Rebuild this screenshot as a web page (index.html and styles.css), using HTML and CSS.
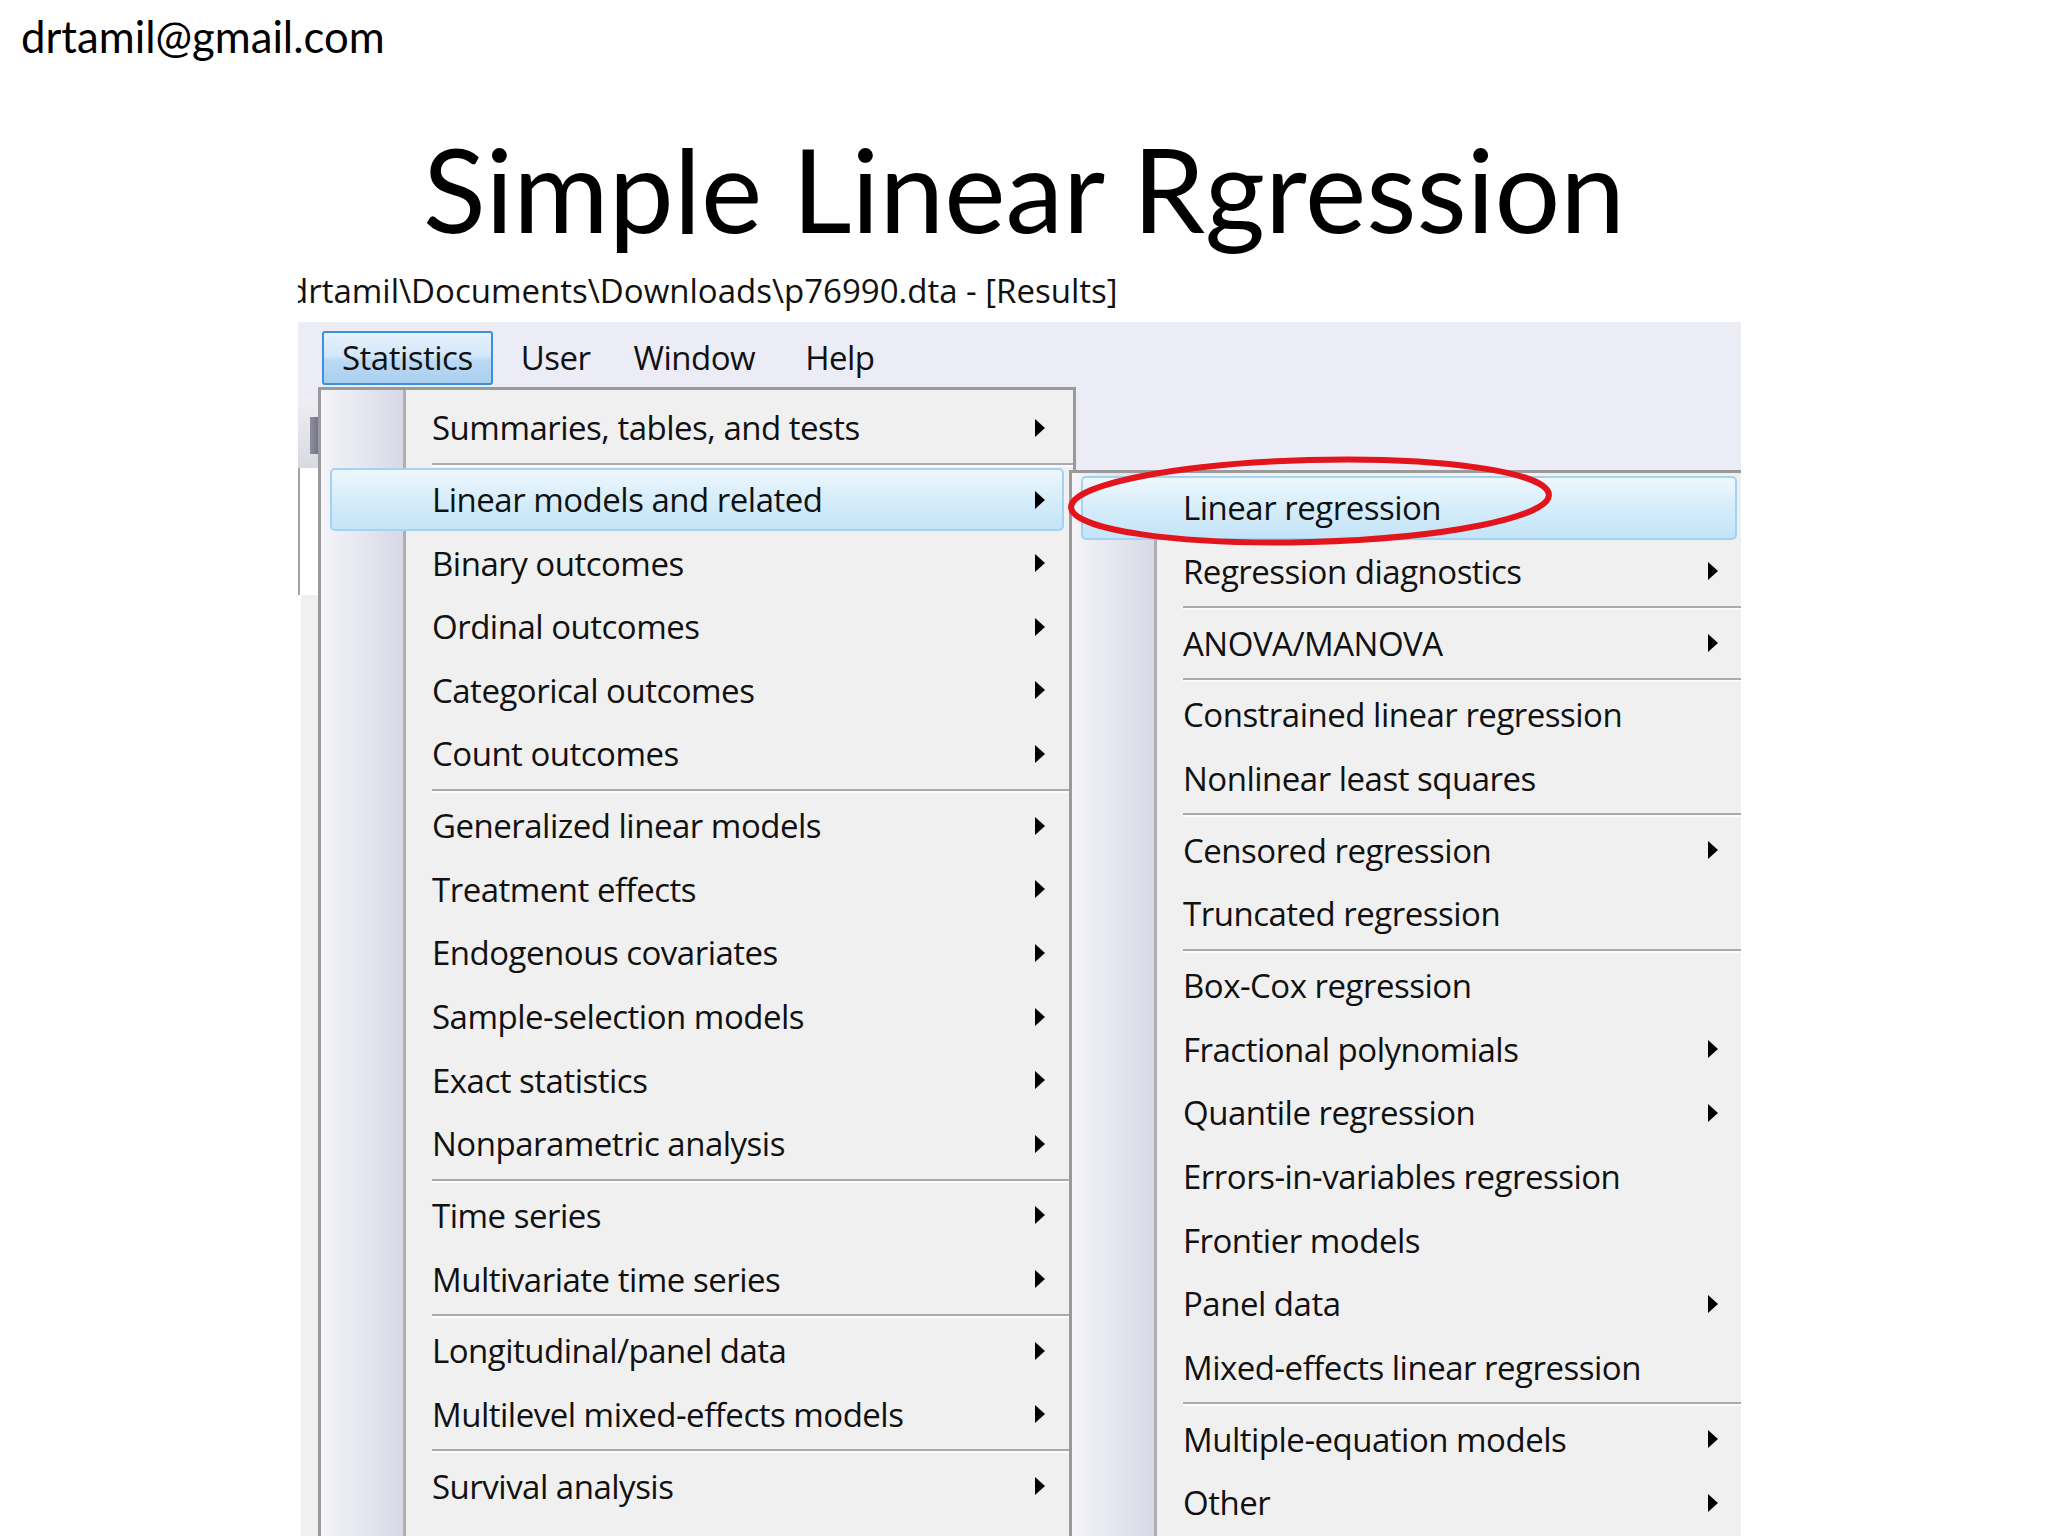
FILE: index.html
```html
<!DOCTYPE html>
<html lang="en">
<head>
  <meta charset="UTF-8" />
  <title>Simple Linear Rgression</title>
  <link rel="stylesheet" href="styles.css">
</head>
<body>

  <div class="email">drtamil@gmail.com</div>

  <h1 class="title">Simple Linear Rgression</h1>

  <div class="shot">
    <div class="titlebar">drtamil\Documents\Downloads\p76990.dta - [Results]</div>

    <div class="menubar">
      <span class="mb-item active">Statistics</span>
      <span class="mb-item mb-user">User</span>
      <span class="mb-item mb-window">Window</span>
      <span class="mb-item mb-help">Help</span>
    </div>

    <div class="workspace">
      <div class="strip">
        <div class="strip-gap"></div>
        <div class="strip-toolbar"><div class="strip-nub"></div></div>
        <div class="strip-pane"></div>
        <div class="strip-rest"></div>
      </div>

      <ul class="menu main-menu">
        <li class="item sub">Summaries, tables, and tests</li>
        <li class="sep"></li>
        <li class="item sub hot">Linear models and related</li>
        <li class="item sub">Binary outcomes</li>
        <li class="item sub">Ordinal outcomes</li>
        <li class="item sub">Categorical outcomes</li>
        <li class="item sub">Count outcomes</li>
        <li class="sep"></li>
        <li class="item sub">Generalized linear models</li>
        <li class="item sub">Treatment effects</li>
        <li class="item sub">Endogenous covariates</li>
        <li class="item sub">Sample-selection models</li>
        <li class="item sub">Exact statistics</li>
        <li class="item sub">Nonparametric analysis</li>
        <li class="sep"></li>
        <li class="item sub">Time series</li>
        <li class="item sub">Multivariate time series</li>
        <li class="sep"></li>
        <li class="item sub">Longitudinal/panel data</li>
        <li class="item sub">Multilevel mixed-effects models</li>
        <li class="sep"></li>
        <li class="item sub">Survival analysis</li>
      </ul>

      <ul class="menu side-menu">
        <li class="item hot">Linear regression</li>
        <li class="item sub">Regression diagnostics</li>
        <li class="sep"></li>
        <li class="item sub">ANOVA/MANOVA</li>
        <li class="sep"></li>
        <li class="item">Constrained linear regression</li>
        <li class="item">Nonlinear least squares</li>
        <li class="sep"></li>
        <li class="item sub">Censored regression</li>
        <li class="item">Truncated regression</li>
        <li class="sep"></li>
        <li class="item">Box-Cox regression</li>
        <li class="item sub">Fractional polynomials</li>
        <li class="item sub">Quantile regression</li>
        <li class="item">Errors-in-variables regression</li>
        <li class="item">Frontier models</li>
        <li class="item sub">Panel data</li>
        <li class="item">Mixed-effects linear regression</li>
        <li class="sep"></li>
        <li class="item sub">Multiple-equation models</li>
        <li class="item sub">Other</li>
      </ul>
    </div>

    <!-- red marker drawn around the chosen command -->
    <svg class="ring" width="490" height="94" viewBox="0 0 490 94">
      <ellipse cx="245" cy="47" rx="239" ry="41" fill="none" stroke="#e3141b" stroke-width="6" transform="rotate(-1.5 245 47)"/>
    </svg>
  </div>

</body>
</html>
```

FILE: styles.css
```css
* {
  box-sizing: border-box;
}

body {
  margin: 0;
  background: #ffffff;
  color: #000;
}

.email {
  font-family: Lato, 'Open Sans', sans-serif;
  font-size: 43.7px;
  line-height: 53px;
  padding: 10px 0 0 21px;
  height: 63px;
}

.title {
  margin: 55px 0 0;
  font-family: Lato, 'Open Sans', sans-serif;
  font-weight: normal;
  font-size: 116px;
  line-height: 142px;
  text-align: center;
}

.shot {
  position: relative;
  margin: 8px 0 0 298px;
  width: 1443px;
  height: 1268px;
  overflow: hidden;
  font-family: 'Open Sans', 'Noto Sans', sans-serif;
  font-size: 33px;
  letter-spacing: -0.5px;
  color: #111;
}

.titlebar {
  height: 54px;
  line-height: 45px;
  white-space: nowrap;
  text-indent: -10px;
  letter-spacing: 0;
  background: #fff;
}

.menubar {
  display: flex;
  align-items: flex-start;
  gap: 5px;
  height: 65px;
  padding: 9px 0 0 24px;
  background: #ececf6;
}

.mb-item {
  padding: 0 18px;
  line-height: 50px;
  border: 2px solid transparent;
  border-radius: 3px;
}

.mb-item.active {
  border-color: #3d8fd9;
  background: linear-gradient(#e6f1fc 0%, #d3e7f9 45%, #bcd9f3 55%, #aacff0 100%);
}

.mb-user {
  margin-left: 3px;
}

.mb-window {
  margin-left: -2px;
}

.mb-help {
  margin-left: 5px;
}

.workspace {
  display: flex;
  align-items: stretch;
  height: 1149px;
  background: #ececf6;
}

/* bits of the Stata window peeking out left of the menu */
.strip {
  width: 20px;
  flex: none;
  display: flex;
  flex-direction: column;
}

.strip-gap {
  height: 10px;
}

.strip-toolbar {
  height: 71px;
  padding-top: 20px;
  background: linear-gradient(#eeeef3, #d9d9e1);
}

.strip-nub {
  margin-left: 12px;
  width: 8px;
  height: 37px;
  background: linear-gradient(to right, #8e8e9c, #75758a);
}

.strip-pane {
  height: 127px;
  background: #fff;
  border-left: 2px solid #a3a3a3;
}

.strip-rest {
  flex: 1;
  background: #f0f0f0;
  border-left: 3px solid #fff;
}

.menu {
  list-style: none;
  margin: 0;
  flex: none;
  border: 3px solid #9a9a9a;
  border-bottom: none;
  background: linear-gradient(to right, #f4f4f9 0, #d7d9e6 82px, #aeaeb7 82px, #aeaeb7 85px, #f0f0f0 85px);
}

.main-menu {
  width: 758px;
  padding: 6px 0 0;
}

.side-menu {
  position: relative;
  z-index: 1;
  width: 680px;
  margin: 83px 0 0 -7px;
  padding: 3px 0 0;
}

.item {
  display: flex;
  align-items: center;
  height: 63.6px;
  padding: 0 28px 0 111px;
  white-space: nowrap;
}

.item.sub::after {
  content: "";
  margin-left: auto;
  border-left: 10px solid #000;
  border-top: 9px solid transparent;
  border-bottom: 9px solid transparent;
}

.item.hot {
  margin: 0 9px;
  padding: 0 17px 0 100px;
  border: 2px solid #a2d4f2;
  border-radius: 5px;
  background: linear-gradient(#eef7fd, #d6edfa 50%, #c4e4f8);
}

.sep {
  height: 8.2px;
  padding: 3px 0 0 111px;
}

.sep::before {
  content: "";
  display: block;
  border-top: 2px solid #a9a9b1;
  border-bottom: 2px solid #fbfbfb;
}

.ring {
  position: absolute;
  z-index: 2;
  left: 767px;
  top: 186px;
}
```
